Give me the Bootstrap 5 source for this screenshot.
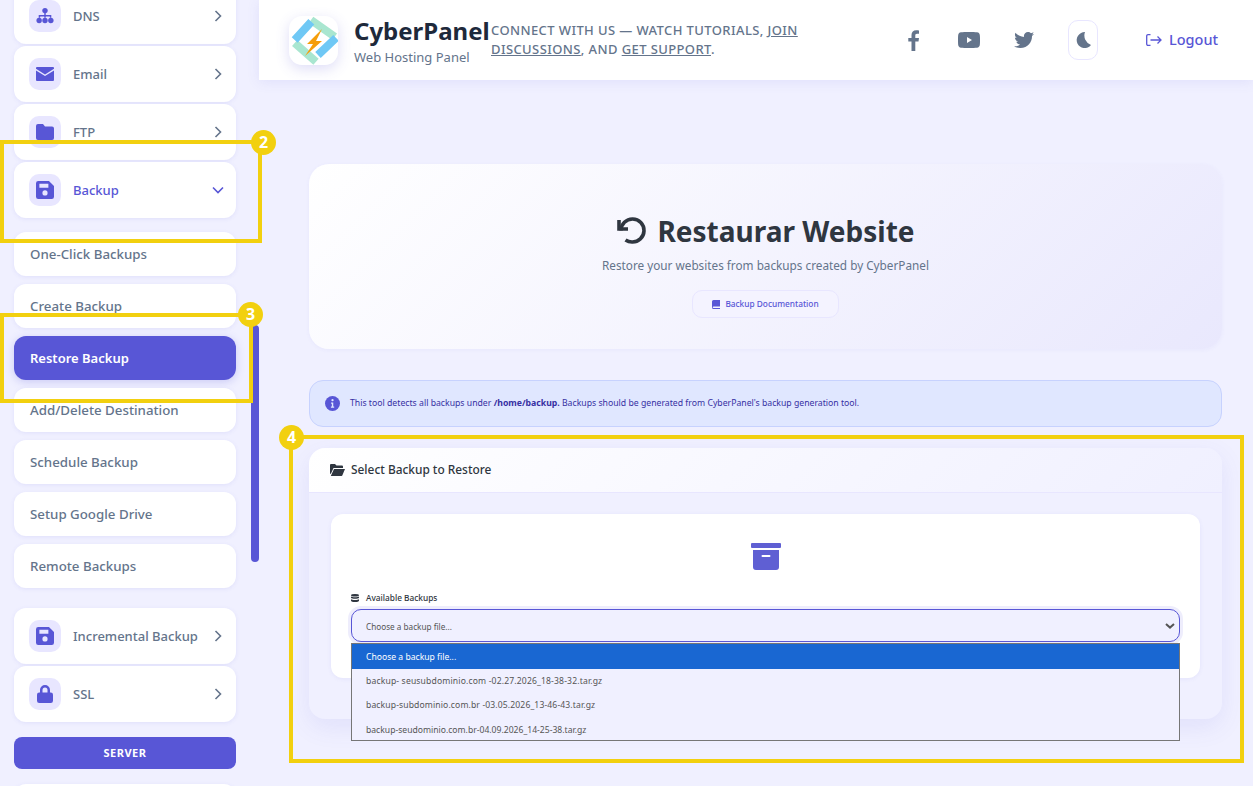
<!doctype html>
<html lang="en"><head><meta charset="utf-8">
<link href="https://cdn.jsdelivr.net/npm/bootstrap@5.3.0/dist/css/bootstrap.min.css" rel="stylesheet">
<style>
:root{--pri:#5856d6;--bgm:#f0f0ff;--mut:#64748b}
html,body{height:100%}
body{background:var(--bgm);font-family:"Noto Sans",sans-serif;overflow:hidden;width:1253px;height:786px;position:relative}
.app{display:flex;height:786px}
.side{width:259px;flex:none;height:786px;overflow:hidden;padding:0 23px 0 14px}
.side-list{margin-top:-12px;display:flex;flex-direction:column}
.mi{height:56px;background:#fff;border-radius:12px;display:flex;align-items:center;padding:0 12px 0 15px;margin-bottom:2px;box-shadow:0 1px 4px rgba(88,86,214,.1);font-size:13px;font-weight:500;color:var(--mut);flex:none}
.mi .ic{width:32px;height:32px;border-radius:10px;background:#e8e6ff;display:flex;align-items:center;justify-content:center;margin-right:12px;flex:none}
.mi .ic svg{width:18px;height:18px;fill:var(--pri)}
.mi .lb{flex:1;white-space:nowrap;padding-top:2px}
.mi .ch{width:12px;height:12px;fill:none;stroke:var(--mut);stroke-width:1.6;margin-right:0}
.mi.on{color:var(--pri);margin-bottom:14px}
.mi.on .ch{stroke:var(--pri)}
.sub{height:44px;background:#fff;border-radius:12px;display:flex;align-items:center;padding:2px 16px 0;margin-bottom:8px;font-size:13.3px;font-weight:500;color:var(--mut);box-shadow:0 1px 4px rgba(88,86,214,.1);flex:none}
.sub.on{background:var(--pri);color:#fff;font-weight:600;font-size:13px;box-shadow:0 2px 8px rgba(88,86,214,.25)}
.sub.end{margin-bottom:20px}
.sec{height:32px;background:var(--pri);color:#fff;border-radius:8px;font-size:11px;font-weight:700;letter-spacing:.5px;display:flex;align-items:center;justify-content:center;margin-top:13px;margin-bottom:15px;flex:none}
.main{flex:1;min-width:0;display:flex;flex-direction:column}
.top{height:80px;background:#fff;display:flex;align-items:center;padding:0 30px;box-shadow:0 2px 12px rgba(88,86,214,.1);flex:none}
.logo{width:49px;height:49px;border-radius:13px;background:#fff;box-shadow:0 4px 14px rgba(88,86,214,.2);display:flex;align-items:center;justify-content:center;flex:none;margin-right:16px;margin-top:1px}
.brand{width:137px;flex:none;white-space:nowrap;padding-top:4px}
.brand b{display:block;font-size:24px;font-weight:700;line-height:30px;color:#1e293b}
.brand span{display:block;font-size:13px;line-height:23px;color:var(--mut)}
.promo{width:330px;flex:none;font-size:13px;line-height:19px;font-weight:500;color:var(--mut);letter-spacing:.4px;text-transform:uppercase}
.promo a{color:inherit}
.soc{display:flex;align-items:center;margin-left:86px}
.soc>svg,.moon svg{fill:var(--mut);display:block}
.moon{width:30px;height:40px;border:1px solid #e8e6ff;border-radius:10px;display:flex;align-items:center;justify-content:center}
.logout{display:flex;align-items:center;gap:7px;color:var(--pri);font-size:14.5px;font-weight:500;margin-left:48px;text-decoration:none}
.content{padding:84px 31px 0 50px;flex:1}
.hero{height:185px;border-radius:20px;background:linear-gradient(135deg,#fff 0%,#e9e8fd 100%);box-shadow:0 1px 4px rgba(88,86,214,.05);display:flex;flex-direction:column;align-items:center;text-align:center;padding-top:46px}
.hero h1{font-size:28px;font-weight:700;color:#2f3640;margin:0;line-height:42px;display:flex;align-items:center;gap:11px}
.hero p{font-size:11.75px;color:var(--mut);margin:4px 0 16px;line-height:18px}
.doc{height:28px;width:147px;border:1px solid #e8e6ff;border-radius:10px;font-size:8.3px;font-weight:500;color:var(--pri);display:flex;align-items:center;justify-content:center;gap:5px;text-decoration:none;background:#f4f3ff}
.note{height:47px;margin-top:31px;border:1px solid #c7d2fe;border-radius:14px;background:#e0e7ff;display:flex;align-items:center;padding:0 15px;font-size:8.7px;color:#3730a3;gap:10px}
.panel{margin-top:21px;height:271px;border-radius:16px;background:var(--bgm);box-shadow:0 8px 24px rgba(88,86,214,.1);overflow:hidden}
.phead{height:45px;background:linear-gradient(135deg,#fff 0%,#f0f0ff 100%);border-bottom:1px solid #e8e6ff;display:flex;align-items:center;padding:0 21px;gap:6px;font-size:11.9px;font-weight:500;color:#2f3640}
.pbody{padding:21px 22px 0}
.inner{height:164px;background:#fff;border-radius:12px;padding:29px 20px 0;box-shadow:0 1px 4px rgba(88,86,214,.08)}
.lab{font-size:8.3px;color:#2f3640;font-weight:500;display:flex;align-items:center;gap:7px;margin:22px 0 5px;line-height:12px}
.inner select.form-select{height:33px;padding:3px 15px 0 14px;font-size:8.2px;color:#555;background-color:var(--bgm);border:1px solid var(--pri);border-radius:10px;box-shadow:0 0 0 3px #eeedfc;font-family:inherit;background-image:url("data:image/svg+xml,%3Csvg xmlns='http://www.w3.org/2000/svg' viewBox='0 0 10 6'%3E%3Cpath d='M1 1l4 3.600L9 1' fill='none' stroke='%23555' stroke-width='2'/%3E%3C/svg%3E");background-size:10px 6px;background-position:right 4px center}
.drop{position:absolute;left:351px;top:643px;width:829px;height:98px;background:var(--bgm);border:1px solid #767676;font-size:8.6px;color:#555;z-index:5}
.drop div{height:24.3px;line-height:24px;padding-left:14px;white-space:nowrap}
.drop div.act{background:#1967d2;color:#fff;height:25px;line-height:27px}
.drop .l1{letter-spacing:.15px}
.drop .l2{letter-spacing:.12px}
.sbar{position:absolute;left:251px;top:325px;width:8px;height:237px;background:var(--pri);border-radius:4px}
.frame{position:absolute;border:4px solid #f2d00f;z-index:10;pointer-events:none}
.num{position:absolute;width:25px;height:25px;border-radius:50%;background:#f2d00f;color:#fff;font-size:16px;font-weight:700;line-height:25px;text-align:center;z-index:11}
</style></head><body>
<div class="app">
<nav class="side"><div class="side-list">
<div class="mi"><span class="ic"><svg viewBox="0 0 20 18"><circle cx="10" cy="3" r="3"/><path d="M9.2 5h1.600v3H17v3h-1.600V9.500h-4.600V11H9.200V9.500H4.600V11H3V8h6.200z"/><circle cx="3.500" cy="14" r="3"/><circle cx="10" cy="14" r="3"/><circle cx="16.500" cy="14" r="3"/></svg></span><span class="lb">DNS</span><svg class="ch" viewBox="0 0 12 12"><path d="M3.500 1l5 5-5 5"/></svg></div>
<div class="mi"><span class="ic"><svg viewBox="0 0 18 14"><path d="M1 0h16a1 1 0 0 1 1 1v.8L9 7.500 0 1.800V1a1 1 0 0 1 1-1z"/><path d="M0 3.400l9 5.700 9-5.700V13a1 1 0 0 1-1 1H1a1 1 0 0 1-1-1z"/></svg></span><span class="lb">Email</span><svg class="ch" viewBox="0 0 12 12"><path d="M3.500 1l5 5-5 5"/></svg></div>
<div class="mi"><span class="ic"><svg viewBox="0 0 18 16"><path d="M2 0h5l2 2.500h7a2 2 0 0 1 2 2V14a2 2 0 0 1-2 2H2a2 2 0 0 1-2-2V2a2 2 0 0 1 2-2z"/></svg></span><span class="lb">FTP</span><svg class="ch" viewBox="0 0 12 12"><path d="M3.500 1l5 5-5 5"/></svg></div>
<div class="mi on"><span class="ic"><svg viewBox="0 0 16 16"><path fill-rule="evenodd" d="M2 0h9.500L16 4.500V14a2 2 0 0 1-2 2H2a2 2 0 0 1-2-2V2a2 2 0 0 1 2-2zm1 2.500v3.500h8V2.500zM8 8.300a2.300 2.300 0 1 0 0 4.600 2.300 2.300 0 0 0 0-4.600z"/></svg></span><span class="lb">Backup</span><svg class="ch" viewBox="0 0 12 12"><path d="M1 3.500l5 5 5-5"/></svg></div>
<div class="sub">One-Click Backups</div>
<div class="sub">Create Backup</div>
<div class="sub on">Restore Backup</div>
<div class="sub">Add/Delete Destination</div>
<div class="sub">Schedule Backup</div>
<div class="sub">Setup Google Drive</div>
<div class="sub end">Remote Backups</div>
<div class="mi"><span class="ic"><svg viewBox="0 0 16 16"><path fill-rule="evenodd" d="M2 0h9.500L16 4.500V14a2 2 0 0 1-2 2H2a2 2 0 0 1-2-2V2a2 2 0 0 1 2-2zm1 2.500v3.500h8V2.500zM8 8.300a2.300 2.300 0 1 0 0 4.600 2.300 2.300 0 0 0 0-4.600z"/></svg></span><span class="lb">Incremental Backup</span><svg class="ch" viewBox="0 0 12 12"><path d="M3.500 1l5 5-5 5"/></svg></div>
<div class="mi"><span class="ic"><svg viewBox="0 0 16 18"><path fill-rule="evenodd" d="M3 7.500V5a5 5 0 0 1 10 0v2.500h.8A2.200 2.200 0 0 1 16 9.700v6.100a2.200 2.200 0 0 1-2.200 2.200H2.200A2.200 2.200 0 0 1 0 15.800V9.700a2.200 2.200 0 0 1 2.200-2.200zm2.500 0h5V5a2.500 2.500 0 0 0-5 0z"/></svg></span><span class="lb">SSL</span><svg class="ch" viewBox="0 0 12 12"><path d="M3.500 1l5 5-5 5"/></svg></div>
<div class="sec">SERVER</div>
<div class="mi"></div>
</div></nav>
<div class="main">
<header class="top">
<div class="logo"><svg width="49" height="49" viewBox="0 0 49 49" fill="none" stroke-width="8"><path d="M22 4 45.700 20.700M5.700 27 27 45.700" stroke="#a9e6d0"/><path d="M5.700 24 22.300 5.700M29 39 47 22" stroke="#6fc8f5"/><path d="M33 13 18 28h6l-8 12 17-15h-6z" fill="#f59e0b" stroke="none"/></svg></div>
<div class="brand"><b>CyberPanel</b><span>Web Hosting Panel</span></div>
<div class="promo">Connect with us — watch tutorials, <a href="#">join</a> <a href="#">discussions</a>, and <a href="#">get support</a>.</div>
<div class="soc">
<svg width="13" height="21" viewBox="0 0 13 21" style="margin-right:38px"><path d="M8.300 21v-9.400h3.200l.5-3.700H8.300V5.600c0-1.100.3-1.800 1.800-1.800H12V.4C11.700.3 10.500.2 9.200.2 6.400.2 4.500 1.900 4.500 5v2.900H1.300v3.700h3.200V21z"/></svg>
<svg width="22" height="16" viewBox="0 0 22 16" style="margin-right:34px"><path fill-rule="evenodd" d="M3 .3C6 0 16 0 19 .3c1.600.1 2.600 1.200 2.800 2.700.3 3 .3 7 0 10-.2 1.500-1.200 2.600-2.800 2.700-3 .3-13 .3-16 0C1.400 15.600.4 14.500.2 13c-.3-3-.3-7 0-10C.4 1.500 1.400.4 3 .3zM9 5v6l5-3z"/></svg>
<svg width="20" height="16" viewBox="0 0 20 16" style="margin-right:34px"><path d="M18 4v.5C18 10 14 16 6.300 16 3.900 16 1.800 15.300 0 14.200c.3 0 .6.100 1 .1 2 0 3.700-.7 5.100-1.800-1.800 0-3.300-1.200-3.800-2.800.6.100 1.200.100 1.900-.1C2.300 9.200.9 7.600.9 5.600c.6.300 1.200.5 1.900.5C1 4.900.4 2.300 1.500.7c2 2.500 5.100 4.100 8.500 4.300C9.400 2.300 11.400 0 14 0c1.200 0 2.200.5 3 1.300.9-.2 1.800-.5 2.600-1-.3 1-.9 1.700-1.800 2.200.8-.1 1.600-.3 2.300-.6-.6.8-1.300 1.600-2.100 2.100z"/></svg>
<div class="moon"><svg width="15" height="16" viewBox="0 0 15 16"><path d="M9 .1A8 8 0 1 0 15 13 A10 10 0 0 1 9 .1z"/></svg></div>
<a class="logout" href="#"><svg width="16" height="12" viewBox="0 0 16 12" fill="none" stroke="#5856d6" stroke-width="1.300"><path d="M4.500.7H2A1.300 1.300 0 0 0 .7 2v8A1.300 1.300 0 0 0 2 11.300H4.500M4.500 6H15M11.500 2.500 15 6l-3.500 3.500"/></svg>Logout</a>
</div>
</header>
<div class="content">
<section class="hero">
<h1><svg width="30" height="28" viewBox="0 0 30 28" fill="none" stroke="#2f3640" stroke-width="3.600"><path d="M5 13.500A11.500 11.500 0 1 1 16 25c-2.500 0-4.700-.8-6.500-2"/><path d="M3 3v9h9" stroke-linejoin="miter"/></svg>Restaurar Website</h1>
<p>Restore your websites from backups created by CyberPanel</p>
<a class="doc" href="#"><svg width="8" height="9" viewBox="0 0 8 9" fill="#5856d6"><path d="M1.500 0H8v6.500H1.500a.8.800 0 0 0 0 1.600H8V9H1.500A1.500 1.500 0 0 1 0 7.500v-6A1.500 1.500 0 0 1 1.500 0z"/></svg>Backup Documentation</a>
</section>
<div class="note"><svg width="15" height="15" viewBox="0 0 16 16"><circle cx="8" cy="8" r="8" fill="#5856d6"/><circle cx="8" cy="4.500" r="1.200" fill="#e0e7ff"/><path d="M6.500 7h2.300v4.200h1v1.200H6.300v-1.200h1V8.200h-.8z" fill="#e0e7ff"/></svg><span>This tool detects all backups under <strong>/home/backup.</strong> Backups should be generated from CyberPanel's backup generation tool.</span></div>
<section class="panel">
<div class="phead"><svg width="15" height="12" viewBox="0 0 15 12" fill="#2f3640"><path d="M1 0h4l1.500 1.500H12a1 1 0 0 1 1 1V4H3.500L1 9.500 0 10V1a1 1 0 0 1 1-1z"/><path d="M4 5h11l-2.600 6.300a1 1 0 0 1-.9.700H.8z"/></svg>Select Backup to Restore</div>
<div class="pbody"><div class="inner">
<div class="d-flex justify-content-center"><svg width="30" height="27" viewBox="0 0 30 27"><path fill-rule="evenodd" d="M1 0h28a1 1 0 0 1 1 1v3a1 1 0 0 1-1 1H1a1 1 0 0 1-1-1V1a1 1 0 0 1 1-1zm1 7h26v17a3 3 0 0 1-3 3H5a3 3 0 0 1-3-3zm9.500 5a1 1 0 0 0 0 2h7a1 1 0 0 0 0-2z" fill="#5f5fd3"/></svg></div>
<div class="lab"><svg width="8" height="8" viewBox="0 0 8 8" fill="#2f3640"><ellipse cx="4" cy="1.300" rx="4" ry="1.300"/><path d="M0 2.500c.8 1 7.200 1 8 0V4c-.8 1-7.200 1-8 0zM0 5.200c.8 1 7.200 1 8 0v1.500C8 7.400 6.200 8 4 8S0 7.400 0 6.700z"/></svg>Available Backups</div>
<select class="form-select" aria-label="Available Backups"><option>Choose a backup file...</option></select>
</div></div>
</section>
</div>
</div>
</div>
<div class="drop"><div class="act">Choose a backup file...</div><div class="l1">backup- seusubdominio.com -02.27.2026_18-38-32.tar.gz</div><div class="l2">backup-subdominio.com.br -03.05.2026_13-46-43.tar.gz</div><div>backup-seudominio.com.br-04.09.2026_14-25-38.tar.gz</div></div>
<div class="sbar"></div>
<div class="frame" style="left:0;top:140px;width:262px;height:103px"></div><div class="num" style="left:251px;top:130px">2</div>
<div class="frame" style="left:0;top:313px;width:253px;height:90px"></div><div class="num" style="left:238px;top:302px">3</div>
<div class="frame" style="left:289px;top:435px;width:955px;height:328px"></div><div class="num" style="left:279px;top:425px">4</div>
<script src="https://cdn.jsdelivr.net/npm/bootstrap@5.3.0/dist/js/bootstrap.bundle.min.js"></script>
</body></html>
